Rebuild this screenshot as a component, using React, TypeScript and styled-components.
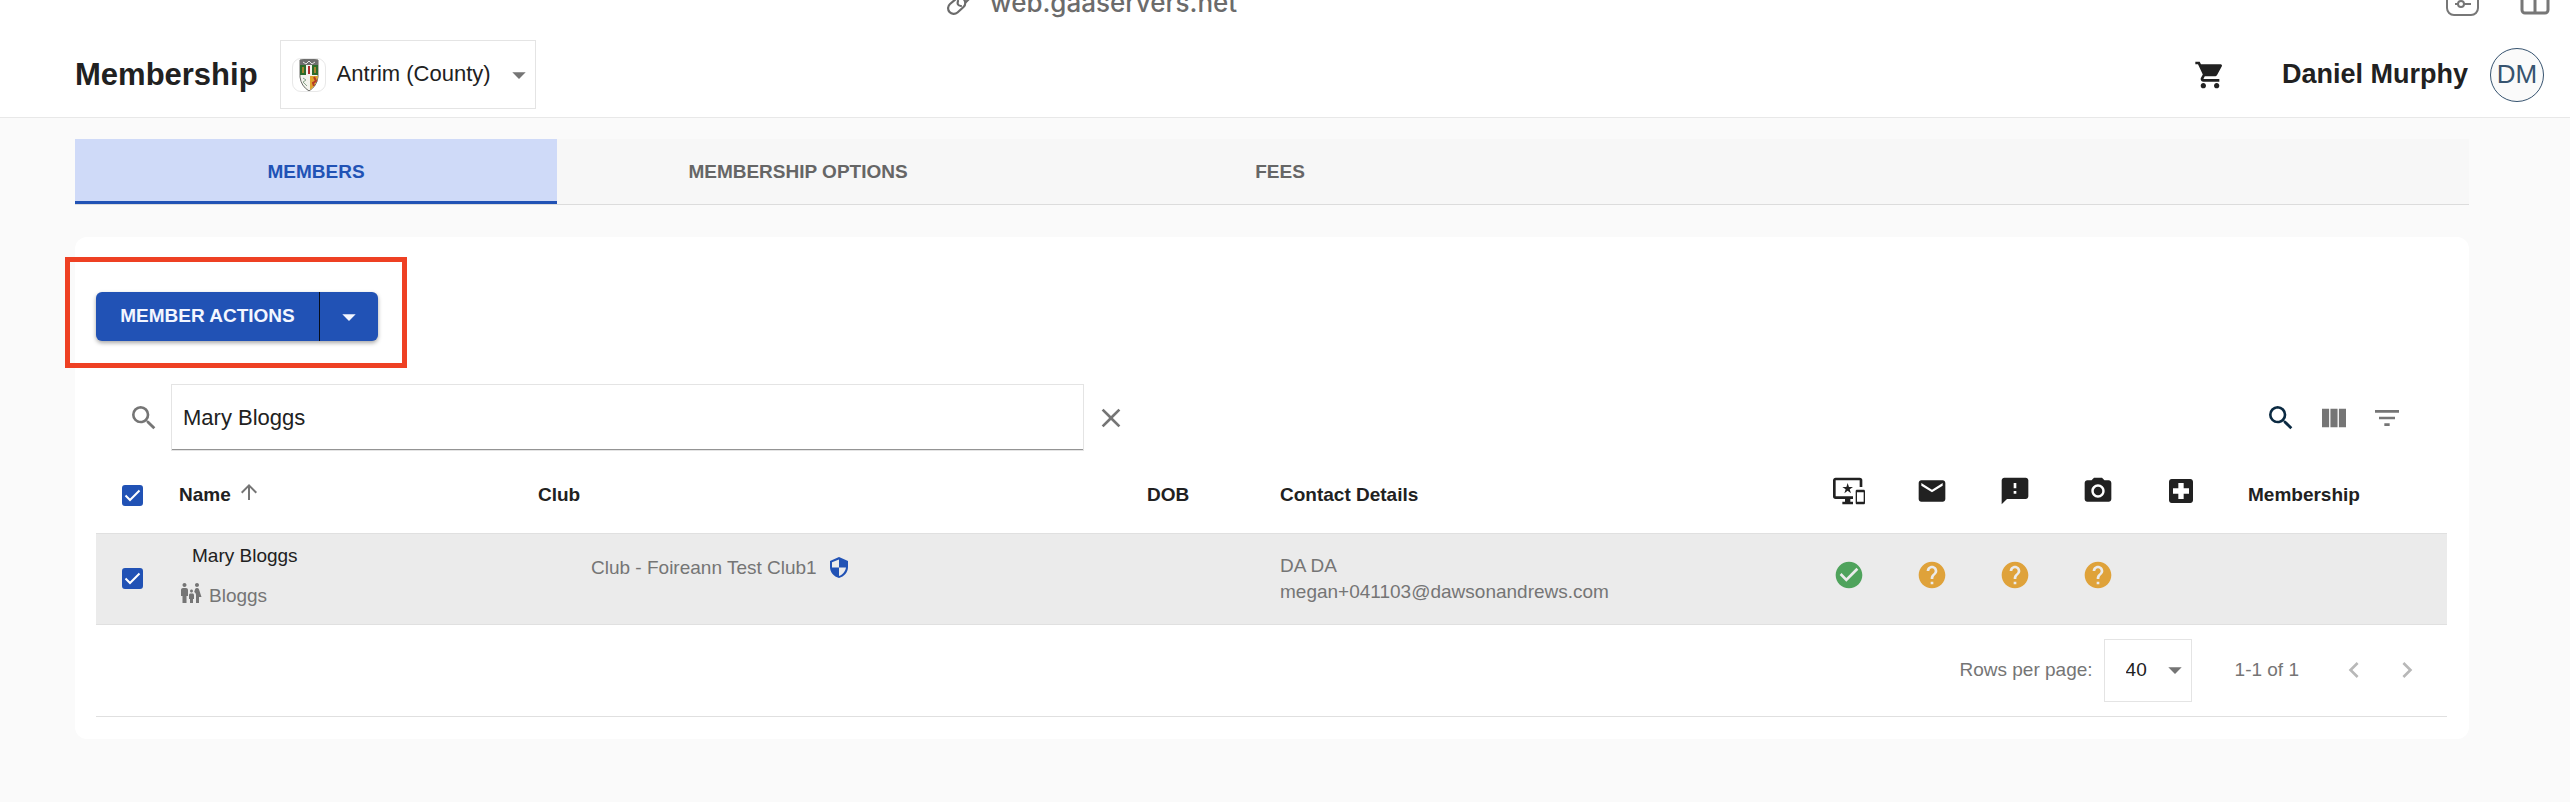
import React, { useState } from "react";
import styled, { createGlobalStyle } from "styled-components";
import {
  MdSearch,
  MdClose,
  MdViewColumn,
  MdFilterList,
  MdShoppingCart,
  MdArrowDropDown,
  MdArrowUpward,
  MdImportantDevices,
  MdMail,
  MdFeedback,
  MdPhotoCamera,
  MdLocalHospital,
  MdCheckCircle,
  MdHelp,
  MdFamilyRestroom,
  MdChevronLeft,
  MdChevronRight,
} from "react-icons/md";

const blue = "#2152b5";
const ink = "#212121";
const muted = "#757575";
const line = "#e0e0e0";

const GlobalStyle = createGlobalStyle`
  *, *::before, *::after { box-sizing: border-box; }
  body {
    margin: 0;
    background: #fafafa;
    color: ${ink};
    font-family: "Liberation Sans", Arial, Helvetica, sans-serif;
    font-size: 19px;
  }
  button, input, select { font: inherit; color: inherit; }
  svg { display: block; flex: none; }
`;

const BrowserStrip = styled.div`
  display: grid;
  grid-template-columns: 946fr 1624fr;
  align-content: end;
  height: 32px;
  overflow: hidden;
  background: #fff;
  color: #6b6b6b;
`;

const Address = styled.div`
  grid-column: 2;
  display: flex;
  align-items: flex-end;
  justify-content: space-between;
  padding: 0 20px 16px 0;
`;

const AddressText = styled.div`
  display: flex;
  align-items: flex-end;
  gap: 14px;
  font: 500 26px/26px Inter, sans-serif;
`;

const AddressTools = styled.div`
  display: flex;
  gap: 41px;
`;

const Header = styled.header`
  display: flex;
  align-items: center;
  height: 86px;
  padding: 0 26px 0 75px;
  background: #fff;
  border-bottom: 1px solid #e8e8e8;
`;

const Title = styled.h1`
  margin: 0 22px 0 0;
  font-size: 31px;
  line-height: 36px;
`;

const SelectBox = styled.div<{ $width: number; $height: number }>`
  position: relative;
  display: flex;
  align-items: center;
  width: ${(p) => p.$width}px;
  height: ${(p) => p.$height}px;
  border: 1px solid #e4e4e4;
  background: #fff;
  color: ${ink};
`;

const NativeSelect = styled.select<{ $left: number; $size: number }>`
  appearance: none;
  width: 100%;
  height: 100%;
  padding: 0 32px 2px ${(p) => p.$left}px;
  border: 0;
  background: transparent;
  font-size: ${(p) => p.$size}px;
`;

const Caret = styled(MdArrowDropDown)`
  position: absolute;
  right: 0;
  color: ${muted};
  pointer-events: none;
`;

const CrestFrame = styled.span`
  position: absolute;
  left: 11px;
  display: grid;
  place-items: center;
  width: 34px;
  height: 34px;
  border: 1px solid #e8e8e8;
  border-radius: 9px;
  pointer-events: none;
`;

const Account = styled.div`
  display: flex;
  align-items: center;
  margin-left: auto;
  font-size: 27px;
  font-weight: 700;
`;

const BareButton = styled.button`
  display: grid;
  place-items: center;
  padding: 0;
  border: 0;
  background: none;
`;

const CartButton = styled(BareButton)`
  margin-right: 56px;
`;

const Avatar = styled.span`
  display: grid;
  place-items: center;
  width: 54px;
  height: 54px;
  margin-left: 22px;
  border: 1px solid #36536f;
  border-radius: 50%;
  background: #fafafa;
  color: #36536f;
  font-size: 26px;
  font-weight: 400;
`;

const Main = styled.main`
  padding: 21px 101px 63px 75px;
`;

const Tabs = styled.div`
  display: flex;
  height: 66px;
  background: #f7f7f7;
  border-bottom: 1px solid #dcdcdc;
`;

const Tab = styled.button<{ $active?: boolean }>`
  flex: 0 1 482px;
  padding: 3px 0 0;
  border: 0;
  border-bottom: 3px solid ${(p) => (p.$active ? blue : "transparent")};
  background: ${(p) => (p.$active ? "#cfdaf8" : "transparent")};
  color: ${(p) => (p.$active ? blue : "#666")};
  font-weight: 700;
`;

const Card = styled.section`
  margin-top: 32px;
  padding: 20px 22px 22px 21px;
  border-radius: 12px;
  background: #fff;
`;

const Highlight = styled.div`
  width: fit-content;
  margin-left: -31px;
  padding: 30px 24px 22px 26px;
  border: 5px solid #ee4023;
`;

const SplitButton = styled.div`
  display: flex;
  height: 49px;
  border-radius: 6px;
  background: ${blue};
  color: #f3f6ff;
  box-shadow: 0 2px 4px rgba(0, 0, 0, 0.35);
`;

const ActionButton = styled(BareButton)`
  width: 224px;
  padding-bottom: 2px;
  border-right: 1px solid #050c1c;
  font-weight: 700;
`;

const MenuButton = styled(BareButton)`
  width: 58px;
`;

const Toolbar = styled.div`
  display: flex;
  align-items: center;
  margin-top: 16px;
  padding: 0 34px 0 32px;
  color: ${muted};
`;

const SearchInput = styled.input`
  flex: 0 1 913px;
  min-width: 0;
  height: 67px;
  margin-left: 11px;
  padding: 0 11px;
  border: 1px solid #e4e4e4;
  background: #fff;
  box-shadow: inset 0 -1px #949494;
  color: ${ink};
  font-size: 22px;
`;

const IconButton = styled(BareButton)`
  width: 53px;
  height: 53px;
`;

const Tools = styled.div`
  display: flex;
  margin-left: auto;
`;

const Table = styled.table`
  width: 100%;
  border-collapse: collapse;
  table-layout: fixed;
`;

const Col = styled.col<{ $width?: number }>`
  width: ${(p) => (p.$width ? `${p.$width}px` : "auto")};
`;

const Th = styled.th`
  height: 82px;
  padding: 7px 0 0;
  text-align: left;
  line-height: 22px;
`;

const HeadRow = styled.tr`
  border-bottom: 1px solid ${line};
`;

const BodyRow = styled.tr`
  height: 91px;
  background: #ebebeb;
  border-bottom: 1px solid ${line};
`;

const Td = styled.td`
  padding: 0;
  color: ${muted};
  line-height: 26px;
`;

const SortLabel = styled.span`
  display: flex;
  align-items: center;
  gap: 6px;
`;

const SortArrow = styled(MdArrowUpward)`
  margin-bottom: 6px;
  color: ${muted};
`;

const IconCell = styled.span`
  display: grid;
  place-items: center;
  width: 32px;
  padding-bottom: 8px;
`;

const CheckWrap = styled.span`
  position: relative;
  display: block;
  width: 48px;
`;

const Check = styled.input`
  appearance: none;
  display: block;
  width: 21px;
  height: 21px;
  margin: 0 0 0 26px;
  border: 2px solid ${muted};
  border-radius: 3px;

  &:checked {
    border-color: ${blue};
    background: ${blue};
  }
`;

const Tick = styled.svg`
  position: absolute;
  inset: 0 auto auto 26px;
  pointer-events: none;
`;

const MemberCell = styled.div`
  padding-bottom: 6px;
`;

const MemberName = styled.div`
  padding-left: 13px;
  color: ${ink};
`;

const Family = styled.div`
  display: flex;
  align-items: center;
  gap: 6px;
  height: 26px;
  margin-top: 14px;
`;

const FamilyIcon = styled(MdFamilyRestroom)`
  margin-bottom: 6px;
`;

const ClubLine = styled.div`
  display: flex;
  align-items: center;
  gap: 10px;
  padding: 0 0 21px 53px;
`;

const Pager = styled.footer`
  display: flex;
  align-items: center;
  justify-content: flex-end;
  height: 92px;
  padding-right: 14px;
  border-bottom: 1px solid ${line};
  color: ${muted};
`;

const PagerLabel = styled.label`
  margin-right: 11px;
`;

const PagerRange = styled.span`
  margin: 0 28px 0 43px;
`;

const PageButton = styled(IconButton)`
  color: #b8b8b8;
`;

const Crest = () => (
  <svg width="20" height="32" viewBox="0 0 20 32">
    <path d="M1 1q9-2 18 0v17q-1 9-9 14Q2 27 1 18z" fill="#f4f4ee" stroke="#6a6a66" />
    <path d="M1 1q9-2 18 0v5H1z" fill="#6e6e6e" />
    <path d="M4 3l3 2 3-3 3 3 3-2" fill="none" stroke="#e5e5e5" />
    <path d="M1 6h6v10H1zM13 6h6v10h-6z" fill="#2c6b2a" />
    <path d="M3 8h2v6H3zM15 8h2v6h-2z" fill="#a2842f" />
    <path d="M9 7h2v8H9z" fill="#b02d2d" />
    <path d="M11 17h8q-1 9-8 14z" fill="#dda32c" />
    <path d="M15 18l2 4-3 2 1 3" fill="none" stroke="#b63a26" strokeWidth="2" />
    <path d="M4 19l3 2-3 2 4 4" fill="none" stroke="#8aa38b" />
  </svg>
);

const Shield = () => (
  <svg width="24" height="22" viewBox="0 0 24 22" fill={blue}>
    <path
      fillRule="evenodd"
      d="M12 0L3 4v6c0 5.200 3.800 9.600 9 11 5.200-1.400 9-5.800 9-11V4zM12 2.400V10.500h7c-.6 4-3.300 7.200-7 8.500V10.500H5V5.300z"
    />
  </svg>
);

const Checkbox = ({ label }: { label: string }) => {
  const [on, setOn] = useState(true);
  return (
    <CheckWrap>
      <Check type="checkbox" aria-label={label} checked={on} onChange={() => setOn(!on)} />
      {on && (
        <Tick width="21" height="21" viewBox="0 0 21 21" fill="none" stroke="#fff" strokeWidth="2">
          <path d="M3.500 10.500l4.500 4.500L17.500 5.500" />
        </Tick>
      )}
    </CheckWrap>
  );
};

const statusColumns = [
  { name: "Registered", Icon: MdImportantDevices, state: "ok" },
  { name: "Email", Icon: MdMail, state: "unknown" },
  { name: "Notices", Icon: MdFeedback, state: "unknown" },
  { name: "Photo", Icon: MdPhotoCamera, state: "unknown" },
  { name: "Medical", Icon: MdLocalHospital, state: "none" },
];

export default function App() {
  const [query, setQuery] = useState("Mary Bloggs");
  return (
    <>
      <GlobalStyle />
      <BrowserStrip>
        <Address>
          <AddressText>
            <svg width="30" height="30" viewBox="0 0 30 30" fill="none" stroke="#6b6b6b" strokeWidth="2.200" strokeLinecap="round">
              <path d="M10 13l-6 5a5.500 5.500 0 0 0 7.500 8.500l6-5.500a5.500 5.500 0 0 0-.5-8.500" />
              <path d="M12 15q-1.500 4.500 3 5M20 16l5-5a5.500 5.500 0 0 0-7.500-8l-5 5" />
            </svg>
            web.gaaservers.net
          </AddressText>
          <AddressTools>
            <svg width="33" height="32" viewBox="0 0 33 32" fill="none" stroke="#777" strokeWidth="2">
              <rect x="1" y="-1" width="31" height="32" rx="7" />
              <path d="M9 20h4M17 20h8" />
              <circle cx="15" cy="20" r="3" />
            </svg>
            <svg width="30" height="32" viewBox="0 0 30 32" fill="none" stroke="#777" strokeWidth="3">
              <rect x="2" y="0" width="26" height="29" rx="3" />
              <path d="M15 0v29" />
            </svg>
          </AddressTools>
        </Address>
      </BrowserStrip>
      <Header>
        <Title>Membership</Title>
        <SelectBox $width={256} $height={69}>
          <CrestFrame>
            <Crest />
          </CrestFrame>
          <NativeSelect $left={56} $size={22} aria-label="County">
            <option>Antrim (County)</option>
          </NativeSelect>
          <Caret size={32} />
        </SelectBox>
        <Account>
          <CartButton aria-label="Cart">
            <MdShoppingCart size={32} />
          </CartButton>
          Daniel Murphy
          <Avatar>DM</Avatar>
        </Account>
      </Header>
      <Main>
        <Tabs role="tablist">
          <Tab role="tab" aria-selected $active>
            MEMBERS
          </Tab>
          <Tab role="tab">MEMBERSHIP OPTIONS</Tab>
          <Tab role="tab">FEES</Tab>
        </Tabs>
        <Card>
          <Highlight>
            <SplitButton>
              <ActionButton>MEMBER ACTIONS</ActionButton>
              <MenuButton aria-label="More member actions">
                <MdArrowDropDown size={32} />
              </MenuButton>
            </SplitButton>
          </Highlight>
          <Toolbar>
            <MdSearch size={32} />
            <SearchInput aria-label="Search members" value={query} onChange={(e) => setQuery(e.target.value)} />
            <IconButton aria-label="Clear search" onClick={() => setQuery("")}>
              <MdClose size={32} />
            </IconButton>
            <Tools>
              <IconButton aria-label="Search">
                <MdSearch size={32} color="#0b2a42" />
              </IconButton>
              <IconButton aria-label="View columns">
                <MdViewColumn size={32} />
              </IconButton>
              <IconButton aria-label="Filter">
                <MdFilterList size={32} />
              </IconButton>
            </Tools>
          </Toolbar>
          <Table>
            <colgroup>
              <Col $width={83} />
              <Col $width={359} />
              <Col $width={609} />
              <Col $width={133} />
              <Col />
              {statusColumns.map((c) => (
                <Col key={c.name} $width={83} />
              ))}
              <Col $width={199} />
            </colgroup>
            <thead>
              <HeadRow>
                <Th>
                  <Checkbox label="Select all members" />
                </Th>
                <Th>
                  <SortLabel>
                    Name <SortArrow size={24} />
                  </SortLabel>
                </Th>
                <Th>Club</Th>
                <Th>DOB</Th>
                <Th>Contact Details</Th>
                {statusColumns.map(({ name, Icon }) => (
                  <Th key={name} aria-label={name}>
                    <IconCell>
                      <Icon size={32} />
                    </IconCell>
                  </Th>
                ))}
                <Th>Membership</Th>
              </HeadRow>
            </thead>
            <tbody>
              <BodyRow>
                <Td>
                  <Checkbox label="Select Mary Bloggs" />
                </Td>
                <Td>
                  <MemberCell>
                    <MemberName>Mary Bloggs</MemberName>
                    <Family>
                      <FamilyIcon size={24} />
                      Bloggs
                    </Family>
                  </MemberCell>
                </Td>
                <Td>
                  <ClubLine>
                    Club - Foireann Test Club1
                    <Shield />
                  </ClubLine>
                </Td>
                <Td />
                <Td>
                  DA DA
                  <br />
                  megan+041103@dawsonandrews.com
                </Td>
                {statusColumns.map(({ name, state }) => (
                  <Td key={name}>
                    <IconCell>
                      {state === "ok" && <MdCheckCircle size={32} color="#4fa35c" />}
                      {state === "unknown" && <MdHelp size={32} color="#dfa23a" />}
                    </IconCell>
                  </Td>
                ))}
                <Td />
              </BodyRow>
            </tbody>
          </Table>
          <Pager>
            <PagerLabel htmlFor="page-size">Rows per page:</PagerLabel>
            <SelectBox $width={88} $height={63}>
              <NativeSelect id="page-size" $left={21} $size={19}>
                <option>40</option>
              </NativeSelect>
              <Caret size={32} />
            </SelectBox>
            <PagerRange>1-1 of 1</PagerRange>
            <PageButton aria-label="Previous page" disabled>
              <MdChevronLeft size={32} />
            </PageButton>
            <PageButton aria-label="Next page" disabled>
              <MdChevronRight size={32} />
            </PageButton>
          </Pager>
        </Card>
      </Main>
    </>
  );
}
